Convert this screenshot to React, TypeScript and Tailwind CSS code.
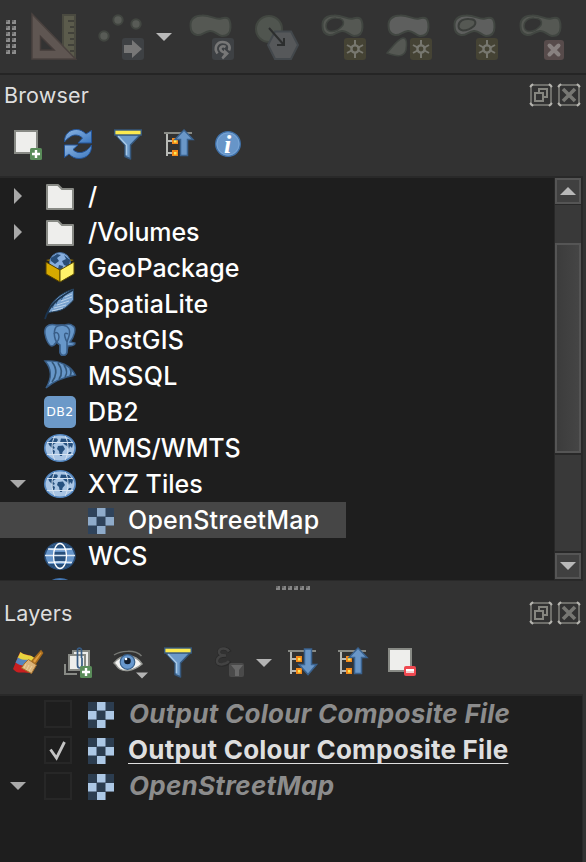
import React from "react";

type Kids = { children?: React.ReactNode };

function Icon({ w = 32, h = 32, box, className = "", children }: Kids & { w?: number; h?: number; box?: string; className?: string }) {
  return (
    <svg width={w} height={h} viewBox={box ?? `0 0 ${w} ${h}`} className={`shrink-0 overflow-visible ${className}`} fill="none">
      {children}
    </svg>
  );
}

/* ---------- digitizing toolbar (disabled state) ---------- */

const BLOB =
  "M2.500 26C2 19 7 15.500 14 15.500C23 15 27 20 33 18.500C40 16 42.500 19 42.500 27C42.500 33 40 36 34 36C29 35 27 30.500 22 31C16 31.500 14 36 9 35C4 34 2.500 31 2.500 26Z";

function Blob({ fill = "#555853" }: { fill?: string }) {
  return <path d={BLOB} fill={fill} stroke="#414641" strokeWidth="2" />;
}

function Hole() {
  return <path d="M6 26C6 21 11 17.500 16 18C22 18 24.500 21 23 25C20 29 16 31.500 11 31.500C8 31 6 29 6 26Z" fill="#333" stroke="#404540" strokeWidth="1.5" />;
}

function GearBadge() {
  return (
    <g>
      <rect x="24" y="38" width="22" height="22" rx="3" fill="#454334" />
      <g stroke="#77776f" strokeWidth="2">
        <path d="M35 40V45M35 53V58M27 45L31.5 47.5M38.500 50.500L43 53M27 53L31.500 50.500M38.500 47.500L43 45" />
        <circle cx="35" cy="49" r="3.600" strokeWidth="2.400" />
      </g>
    </g>
  );
}

function TopToolbar() {
  return (
    <div className="flex h-[73px] shrink-0 items-start overflow-hidden bg-[#333333]">
      <Icon w={30} h={73}>
        {[0, 1, 2, 3, 4, 5].map((i) => (
          <g key={i}>
            <rect x="6" y={20 + i * 6} width="4" height="4" fill="#8c8c8c" />
            <rect x="6" y={20 + i * 6} width="2" height="2" fill="#6c6c6c" />
            <rect x="12" y={20 + i * 6} width="4" height="4" fill="#8c8c8c" />
            <rect x="12" y={20 + i * 6} width="2" height="2" fill="#6c6c6c" />
          </g>
        ))}
      </Icon>
      <Icon w={48} h={73}>
        <rect x="33" y="15" width="12" height="42" fill="#5b5b4c" stroke="#4a4a40" strokeWidth="2" />
        <path d="M38 21H44M40 27H44M38 33H44M40 39H44M38 45H44M40 51H44" stroke="#41413a" strokeWidth="2" />
        <path d="M2 14L45.500 59H2Z" fill="#5f5652" stroke="#4a423f" strokeWidth="1.500" />
        <path d="M10.500 36.500L24 50H10.500Z" fill="#333" stroke="#443c3a" strokeWidth="1.500" />
      </Icon>
      <Icon w={48} h={73} className="ml-5">
        <g fill="#585b56" stroke="#424641" strokeWidth="2">
          <circle cx="20" cy="20" r="4.700" />
          <circle cx="38" cy="24" r="4.700" />
          <circle cx="6" cy="36" r="4.700" />
        </g>
        <rect x="24" y="38" width="22" height="22" rx="3" fill="#3e4144" />
        <path d="M26 45H34V40L44 49L34 58V53H26Z" fill="#777" />
      </Icon>
      <Icon w={20} h={73} className="ml-2">
        <path d="M2 33H18L10 41Z" fill="#b9b9b9" />
      </Icon>
      <Icon w={48} h={73} className="ml-[14px]">
        <Blob />
        <rect x="24" y="38" width="22" height="22" rx="3" fill="#3e4144" />
        <path d="M29.500 53.500C25.500 48 29 42 34.500 42C40 42 43 46 41 50.500" stroke="#777" strokeWidth="2.600" />
        <path d="M37.500 47C34 45 31 48 33 50.500C34 52 36 52.500 37.500 53" stroke="#777" strokeWidth="2.600" />
        <path d="M36 49L41 53.500L35 59.500L33.500 57.500L36 54Z" fill="#777" />
      </Icon>
      <Icon w={48} h={73} className="ml-[18px]">
        <circle cx="15" cy="29" r="13" fill="#50554f" stroke="#424741" strokeWidth="2" />
        <path d="M14 45L21 31.500H37L44 45L37 59H21Z" fill="#56585a" stroke="#43484c" strokeWidth="2" />
        <path d="M15 28L30 45M30 38V45H23" stroke="#2c2e2e" strokeWidth="2" />
      </Icon>
      <Icon w={48} h={73} className="ml-[18px]">
        <Blob /><Hole /><GearBadge />
      </Icon>
      <Icon w={48} h={73} className="ml-[18px]">
        <Blob fill="#5e5f5e" />
        <path d="M1 53C7 46 12 39 17 38C21 38 21 44 20 50C18 57 12 57 1 53Z" fill="#555853" stroke="#414641" strokeWidth="1.500" />
        <GearBadge />
      </Icon>
      <Icon w={48} h={73} className="ml-[18px]">
        <Blob fill="#5e5f5e" />
        <path d="M6.500 26C6.500 21 12 18.500 17 19C23 19 25 22 22 26C18 29.500 15 30.500 11 30.500C8 30 6.500 29 6.500 26Z" fill="#555853" stroke="#3b3e3b" strokeWidth="2" />
        <GearBadge />
      </Icon>
      <Icon w={48} h={73} className="ml-[18px]">
        <Blob /><Hole />
        <rect x="26" y="40" width="20" height="20" rx="3" fill="#574b4b" />
        <path d="M31.500 45.500L40.500 54.500M40.500 45.500L31.500 54.500" stroke="#888180" strokeWidth="4" strokeLinecap="round" />
      </Icon>
    </div>
  );
}

/* ---------- panel chrome ---------- */

function FrameButton({ kind }: { kind: "float" | "close" }) {
  return (
    <button className="block h-[22px] w-[22px]">
      <Icon w={22} h={22}>
        <rect x="1" y="1" width="20" height="20" rx="1" stroke="#6e6e6a" strokeWidth="2" />
        <path d="M0 3L3 0M19 0L22 3M0 19L3 22M22 19L19 22" stroke="#b5b4af" strokeWidth="2" />
        {kind === "float" ? (
          <path d="M5 9H13V17H5ZM9 8V5H17V13H14" stroke="#85857f" strokeWidth="2" />
        ) : (
          <path d="M5 5L17 17M17 5L5 17" stroke="#777773" strokeWidth="3.600" />
        )}
      </Icon>
    </button>
  );
}

function PanelHeader({ title }: { title: string }) {
  return (
    <div className="flex h-[42px] shrink-0 items-start pr-[6px] pl-[4px]">
      <h2 className="text-[21.500px] font-normal leading-[40px] tracking-[0.15px] text-[#dedede]">{title}</h2>
      <div className="mt-[9px] ml-auto flex gap-[6px]">
        <FrameButton kind="float" />
        <FrameButton kind="close" />
      </div>
    </div>
  );
}

/* ---------- panel toolbar icons ---------- */

function Sheet() {
  return <rect x="3" y="3" width="22" height="22" fill="#eeeeec" stroke="#888a85" strokeWidth="2" />;
}

function PlusBadge() {
  return (
    <g>
      <rect x="18" y="20" width="12" height="12" rx="1.500" fill="#5a8c5a" />
      <path d="M24 22V30M20 26H28" stroke="#fff" strokeWidth="2.400" />
    </g>
  );
}

function AddSheet() {
  return <Icon><Sheet /><PlusBadge /></Icon>;
}

function RemoveSheet() {
  return (
    <Icon>
      <Sheet />
      <rect x="18" y="20" width="12" height="10" rx="2" fill="#ef4850" />
      <rect x="20" y="23" width="8" height="4" fill="#fff" />
      <rect x="20" y="25" width="8" height="2" fill="#f3d0d0" />
    </Icon>
  );
}

function Refresh() {
  return (
    <Icon>
      <defs>
        <linearGradient id="ref" x1="0" y1="0" x2="1" y2="1">
          <stop offset="0" stopColor="#8db5e2" /><stop offset="1" stopColor="#3c78c0" />
        </linearGradient>
      </defs>
      <path d="M2.500 14C2 6 8 1.500 14.500 1.500C18 1.500 21 3 24 6L29.500 2.500V15H16L20.500 10C17 6.500 12 6 8 9C5.500 10.500 4 12 2.500 14Z" fill="url(#ref)" stroke="#24559a" />
      <path d="M29.500 17C30 26 24 30.500 17 30.500C13 30.500 10 29 7 26L2.500 29.500V17H16L11 21.500C15 26 21 25 25 22C27 20.500 28 19 29.500 17Z" fill="url(#ref)" stroke="#24559a" />
    </Icon>
  );
}

function Funnel() {
  return (
    <Icon>
      <path d="M3.500 6.500H28.500L18.500 17V31L13 28.500V17Z" fill="#6c9aca" stroke="#36587d" strokeWidth="1.500" strokeLinejoin="round" />
      <path d="M6 8L14.500 17V27" stroke="#a8c9e8" strokeWidth="1.500" />
      <rect x="2.700" y="2" width="26.600" height="5" fill="#fce94f" stroke="#36587d" strokeWidth="1.400" />
    </Icon>
  );
}

function TreeArrow({ down = false }: { down?: boolean }) {
  return (
    <Icon>
      <path d="M2 5H30" stroke="#888a85" strokeWidth="2" />
      <path d="M5 6V28M5 13H10M5 25H10" stroke="#b8bab6" strokeWidth="2" />
      <rect x="10" y="10" width="6" height="6" fill="#f58a1a" /><rect x="12" y="12" width="2.500" height="2.500" fill="#fce94f" />
      <rect x="10" y="22" width="6" height="6" fill="#f58a1a" /><rect x="12" y="24" width="2.500" height="2.500" fill="#fce94f" />
      {down ? (
        <path d="M18.500 3H25.500V18.500H30.500L22 28.500L13 18.500H18.500Z" fill="#6a97c8" stroke="#3a628e" strokeWidth="1.500" />
      ) : (
        <path d="M22 2L31 11.500H25.500V27.500H18.500V11.500H13Z" fill="#6a97c8" stroke="#3a628e" strokeWidth="1.500" />
      )}
    </Icon>
  );
}

function Info() {
  return (
    <Icon>
      <circle cx="16" cy="16" r="12.300" fill="#6795c8" stroke="#3f70a8" strokeWidth="1.300" />
      <circle cx="16" cy="16" r="11" stroke="#78a5d5" strokeWidth="1" />
      <text x="12" y="24.500" className="fill-white font-['Liberation_Serif',serif] text-[26px] font-bold italic">i</text>
    </Icon>
  );
}

function Brush() {
  return (
    <Icon>
      <path d="M8 6C13 10 18 7 23 13L17 27C10 25 6 29 1 23Z" fill="#c81f20" />
      <path d="M8.500 6C14 11 18 7 23.500 13L22 17C15 12 11 17 5.500 12Z" fill="#e8d33f" />
      <path d="M6 11.500C12 16 16 11 21.500 17L19 22C13 18 9 21 3.500 16.500Z" fill="#5684bd" />
      <path d="M20 15L29 5L30.500 7L23 18Z" fill="#df9d3f" stroke="#a86c1d" strokeWidth="1.500" />
      <path d="M16.500 13.500L24.500 19L19.500 27.500L9.500 22L12 18Z" fill="#dcb47a" stroke="#a66e28" strokeWidth="1" />
      <path d="M14 18L12 22M17 19L14.500 24M20 20L17 25" stroke="#f0d5a5" strokeWidth="0.800" />
    </Icon>
  );
}

function AddGroup() {
  return (
    <Icon>
      <path d="M3 18V28H15" stroke="#888a85" strokeWidth="2" />
      <rect x="11" y="5" width="16" height="16" fill="#ededeb" stroke="#888a85" strokeWidth="2" />
      <rect x="7" y="9" width="16" height="15" fill="#ededeb" stroke="#888a85" strokeWidth="2" />
      <path d="M19.500 12V4C19.500 1.500 15.500 1.500 15.500 4V19C15.500 23 20 23 20 19V12" stroke="#385c84" strokeWidth="1.700" />
      <PlusBadge />
    </Icon>
  );
}

function Eye() {
  return (
    <Icon w={36}>
      <path d="M2 9C8 5 23 3 29.500 10" stroke="#777975" strokeWidth="1.500" />
      <path d="M2 17C9 8 23 7 30 18C22 25 9 28 4 19Z" fill="#f3f3f1" stroke="#969894" strokeWidth="1.500" />
      <circle cx="15.500" cy="16" r="7.300" fill="#6798ce" stroke="#38608b" strokeWidth="1.200" />
      <circle cx="15.500" cy="15" r="3.300" fill="#101c2c" />
      <circle cx="14" cy="13" r="1.300" fill="#fff" />
      <path d="M24 26.500H36L30 32.500Z" fill="#b4b4b4" />
    </Icon>
  );
}

function ExpressionFilter() {
  return (
    <Icon>
      <path d="M18 6C15 0.500 6.500 2 7 6C7 9 10 10 14 10C8 9.500 4.500 11.500 5 15C5 20.500 14 20 18 15" stroke="#2a2a2a" strokeWidth="3.500" />
      <path d="M17 5.500C14 1 7 2 7 6C7 9 10 9.500 14 9.500C8 9.500 5 11 5 15C5 19.500 13 19.500 17 15" stroke="#434343" strokeWidth="2.500" />
      <rect x="17" y="17" width="15" height="14" rx="2" fill="#4a4a4a" />
      <path d="M19 19H31L27 24V30H23V24Z" fill="#686868" />
    </Icon>
  );
}

function DropArrow() {
  return <Icon w={16}><path d="M0 13H16L8 21Z" fill="#b4b4b4" /></Icon>;
}

/* ---------- tree icons ---------- */

function Folder() {
  return (
    <Icon>
      <path d="M3 5H14L18 9H29V29H3Z" fill="#eeeeec" stroke="#888a85" strokeWidth="2" strokeLinejoin="round" />
    </Icon>
  );
}

function GeoPackage() {
  return (
    <Icon>
      <path d="M2 8L16 14L30 8L16 5Z" fill="#8d6a00" />
      <circle cx="16" cy="11" r="10.500" fill="#87aede" stroke="#456c9b" />
      <path d="M7 6L13 2L17 3L13 6L15 9L11 12L7 9ZM20 3L26 8L25 15L20 13L18 9L22 7ZM15 13L19 14L18 19L14 17Z" fill="#284d77" />
      <path d="M2 10L16 18V30L2 22Z" fill="#d7aa00" stroke="#533f00" />
      <path d="M30 10L16 18V30L30 22Z" fill="#fff269" stroke="#5b4b00" />
    </Icon>
  );
}

function Feather() {
  return (
    <Icon>
      <path d="M4 25C6 13 17 5 29.500 1V12C27 14 23 20 17 22C12 24 9 23 4 25Z" fill="#78a2cf" stroke="#26435f" />
      <path d="M8 23L19 20M10 20L22 17M13 17L25 13M17 13L28 9M21 9L28 6" stroke="#b9d0e7" />
      <path d="M8 20L10 16M12 16L14 11M17 12L20 7" stroke="#284f77" />
      <path d="M1 31C5 17 14 10 29 2" stroke="#1b344f" strokeWidth="1.800" />
    </Icon>
  );
}

function Elephant() {
  return (
    <Icon>
      <g fill="#6797c9" stroke="#395e88" strokeWidth="1.500">
        <path d="M12 1C3-1 0 4 1 10C2 16 5 22 8 22C10 22 12 19 13 17L16 20V28C17 33 23 32 23 27L24 22C28 22 31 21 31 19L26 18C30 13 33 4 29 2C27 0 24 0 21 1Z" />
        <path d="M12 3C16 0 23 1 25 5C27 10 24 14 23 18V27C23 32 17 33 16 28V21C10 18 9 8 12 3Z" />
        <path d="M10 10C12 7 15 9 15 13C15 18 12 18 10 21M24 10C21 8 20 10 21 13C22 17 23 17 23 18" fill="none" />
      </g>
    </Icon>
  );
}

function MsSql() {
  return (
    <Icon>
      <path d="M1 1C16 0 27 6 31.500 15C20 17 10 21 2 28C8 18 8 9 1 1Z" fill="#6797c9" stroke="#365b84" strokeWidth="1.400" />
      <path d="M8 2C14 9 12 17 8 22M14 3C19 10 18 15 15 19M20 5C24 11 23 14 21 17M26 9C28 12 27 14 26 16" stroke="#345779" strokeWidth="1.700" />
    </Icon>
  );
}

function Db2() {
  return (
    <div className="flex h-8 w-8 shrink-0 items-center justify-center rounded-[5px] bg-[#6c99c8] font-['DejaVu_Sans',sans-serif] text-[12.500px] tracking-[0.500px] text-white">
      DB2
    </div>
  );
}

function GlobeLand() {
  return (
    <Icon>
      <ellipse cx="16" cy="16" rx="15.200" ry="13.300" fill="#a9c5e4" stroke="#5386c0" strokeWidth="1.600" />
      <path d="M4 10L8 6L13 6.500L14 8L12 11L10 12L9 13.500L11 16L9 17L5 13ZM17 6.500L25 7L29 12L28 16L26 14L25 17L23 14L21 13L19 11L16 10.500ZM14 14L19 13.500L21 17L18.500 20L18 24L16 24L15 19L13 17ZM8 17L11 19L10 23L8.500 22ZM25 20L27.500 20L26 23L24 22Z" fill="#27517f" />
      <path d="M3 10.500H29M3 22.500H29M11 4C7 10 7 22 11 28M21 4C25 10 25 22 21 28" stroke="#d6e3f1" strokeWidth="1" />
    </Icon>
  );
}

function GlobeGrid() {
  return (
    <Icon>
      <ellipse cx="16" cy="16" rx="15" ry="13.300" fill="#6695ca" stroke="#294e79" strokeWidth="1.500" />
      <path d="M5 8C11 2 21 2 27 8ZM5 24C11 30 21 30 27 24ZM10 12H22V21H10Z" fill="#274f7b" />
      <path d="M1 15.500H31M4 9C10 9.500 22 9.500 28 9M4 22.500C10 22 22 22 28 22.500" stroke="#dce8f4" strokeWidth="1.500" />
      <ellipse cx="16" cy="16" rx="6.500" ry="12.500" stroke="#fff" strokeWidth="1.300" />
    </Icon>
  );
}

function GlobeEdge() {
  return (
    <Icon>
      <ellipse cx="16" cy="16" rx="15" ry="13.300" fill="#6695ca" stroke="#3d6ea8" strokeWidth="1.500" />
    </Icon>
  );
}

function Raster({ light, dark }: { light: string; dark: string }) {
  return (
    <Icon w={26} h={26} className="mt-[2px]">
      <path d="M0 0H26V17.500H17.500V26H0Z" fill={dark} />
      <path d="M9 0H17.500V8.500H9ZM0 9H8.500V17.500H0ZM17.500 9H26V17.500H17.500ZM9 18H17.500V26H9Z" fill={light} />
    </Icon>
  );
}

/* ---------- trees ---------- */

type Expand = "open" | "closed" | undefined;

function Expander({ state }: { state: Expand }) {
  return (
    <Icon w={44} h={36}>
      {state === "closed" && <path d="M14 10V26L22 18Z" fill="#a9a9a9" />}
      {state === "open" && <path d="M10 14H26L18 22Z" fill="#a9a9a9" />}
    </Icon>
  );
}

function BrowserRow({ label, icon, expand, className = "" }: { label: string; icon: React.ReactNode; expand?: Expand; className?: string }) {
  return (
    <li className="flex h-9 shrink-0 items-center">
      <Expander state={expand} />
      {icon}
      <span className={`ml-3 text-[25px] leading-9 font-medium whitespace-pre text-white ${className}`}>{label}</span>
    </li>
  );
}

function LayerRow({ label, expand, checked, className }: { label: string; expand?: Expand; checked?: boolean; className: string }) {
  return (
    <li className="flex h-9 items-center">
      <Expander state={expand} />
      <div className="h-7 w-7 shrink-0 border-2 border-[#272727]">
        {checked && (
          <Icon w={24} h={24}>
            <path d="M4.500 11.500L10.500 20L18.500 4" stroke="#c4c4c4" strokeWidth="2.800" />
          </Icon>
        )}
      </div>
      <div className="ml-4"><Raster light="#adc8e5" dark="#2c3d50" /></div>
      <span className={`text-[26px] leading-9 font-bold whitespace-pre ${className}`}>{label}</span>
    </li>
  );
}

function ScrollButton({ up = false }: { up?: boolean }) {
  return (
    <button className="flex h-[26px] w-[26px] shrink-0 items-center justify-center border-2 border-[#555555] bg-[#404040]">
      <Icon w={16} h={8}><path d={up ? "M0 8H16L8 0Z" : "M0 0H16L8 8Z"} fill="#b9b9b9" /></Icon>
    </button>
  );
}

export default function App() {
  return (
    <div className="flex h-[862px] w-[586px] flex-col overflow-hidden bg-[#323232] font-['Inter',sans-serif]">
      <TopToolbar />
      <div className="h-[2px] shrink-0 bg-[#252525]" />

      <section className="flex h-[506px] shrink-0 flex-col">
        <PanelHeader title="Browser" />
        <div className="flex h-[59px] shrink-0 items-start gap-[18px] pt-[11px] pl-3">
          <AddSheet /><Refresh /><Funnel /><TreeArrow /><Info />
        </div>
        <div className="mr-[3px] flex h-[405px] shrink-0 border-t-2 border-r border-b border-[#292929] bg-[#1e1e1e]">
          <ul className="flex min-w-0 flex-1 flex-col overflow-hidden">
            <BrowserRow label="/" icon={<Folder />} expand="closed" />
            <BrowserRow label="/Volumes" icon={<Folder />} expand="closed" className="tracking-[-0.15px]" />
            <BrowserRow label="GeoPackage" icon={<GeoPackage />} />
            <BrowserRow label="SpatiaLite" icon={<Feather />} className="tracking-[0.2px]" />
            <BrowserRow label="PostGIS" icon={<Elephant />} className="tracking-[0.2px]" />
            <BrowserRow label="MSSQL" icon={<MsSql />} className="tracking-[0.2px]" />
            <BrowserRow label="DB2" icon={<Db2 />} className="tracking-[0.4px]" />
            <BrowserRow label="WMS/WMTS" icon={<GlobeLand />} className="tracking-[-0.15px]" />
            <BrowserRow label="XYZ Tiles" icon={<GlobeLand />} expand="open" />
            <li className="flex h-9 w-[346px] shrink-0 items-center bg-[#464646] pl-[88px]">
              <Raster light="#8fabca" dark="#2f435b" />
              <span className="ml-[14px] text-[25px] leading-9 font-medium tracking-[0.22px] text-white">OpenStreetMap</span>
            </li>
            <BrowserRow label="WCS" icon={<GlobeGrid />} />
            <BrowserRow label="" icon={<GlobeEdge />} />
          </ul>
          <div className="flex w-7 shrink-0 flex-col items-center bg-[#282828] pb-[1px]">
            <ScrollButton up />
            <div className="mt-[1px] h-[38px] w-[26px] shrink-0 bg-[#393939]" />
            <div className="h-[210px] w-[26px] shrink-0 border-2 border-[#555555] bg-linear-to-r from-[#3c3c3c] to-[#454545]" />
            <div className="my-[2px] w-[26px] flex-1 bg-[#393939]" />
            <ScrollButton />
          </div>
        </div>
      </section>

      <div className="flex h-3 shrink-0 justify-center gap-[2px] pt-[5px]">
        {[0, 1, 2, 3, 4, 5].map((i) => (
          <div key={i} className="h-1 w-1 bg-[#858585]"><div className="h-[2px] w-[2px] bg-[#666666]" /></div>
        ))}
      </div>

      <section className="flex min-h-0 flex-1 flex-col">
        <PanelHeader title="Layers" />
        <div className="flex h-[59px] shrink-0 items-start pt-[11px] pl-3">
          <Brush />
          <div className="ml-[18px] flex"><AddGroup /></div>
          <div className="ml-[18px] flex"><Eye /></div>
          <div className="ml-[14px] flex"><Funnel /></div>
          <div className="ml-[18px] flex"><ExpressionFilter /></div>
          <div className="ml-3 flex"><DropArrow /></div>
          <div className="ml-[14px] flex gap-[18px]"><TreeArrow down /><TreeArrow /><RemoveSheet /></div>
        </div>
        <div className="mr-[3px] min-h-0 flex-1 border-t-2 border-r border-[#292929] bg-[#1e1e1e]">
          <ul>
            <LayerRow label="Output Colour Composite File" className="ml-[15px] tracking-[0.27px] text-[#8c8c8c] italic" />
            <LayerRow label="Output Colour Composite File" checked className="ml-[14px] tracking-[0.24px] text-[#dfdfdf] underline decoration-1 underline-offset-4 [text-decoration-skip-ink:none]" />
            <LayerRow label="OpenStreetMap" expand="open" className="ml-[15px] tracking-[0.27px] text-[#8c8c8c] italic" />
          </ul>
        </div>
      </section>
    </div>
  );
}
